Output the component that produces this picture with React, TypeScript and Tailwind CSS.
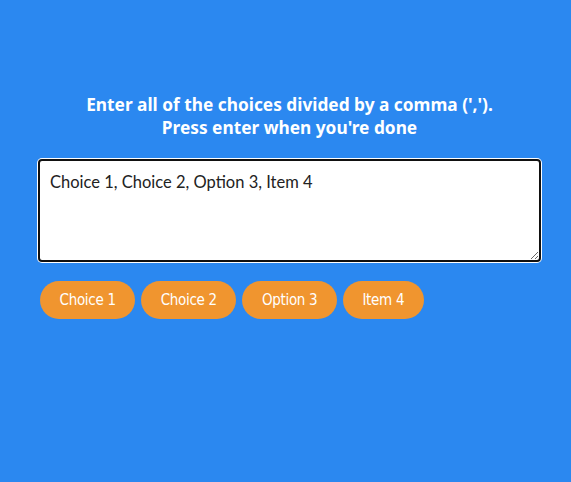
import { useState } from 'react';

export default function App() {
  const [text, setText] = useState('Choice 1, Choice 2, Option 3, Item 4');
  const choices = text.split(',').map((c) => c.trim()).filter(Boolean);

  return (
    <div className="min-h-screen bg-[#2b88f0] pt-[93px]" style={{ fontFamily: 'Lato, "Noto Sans", sans-serif' }}>
      <div className="ml-[38px] w-[503px]">
        <h1
          className="text-center text-[17.3px] leading-[23px] font-bold text-white"
          style={{ fontFamily: '"Noto Sans", Lato, sans-serif' }}
        >
          Enter all of the choices divided by a comma (',').
          <br />
          Press enter when you're done
        </h1>

        <textarea
          autoFocus
          value={text}
          onChange={(e) => setText(e.target.value)}
          className="mt-[20px] block h-[103px] w-full rounded-[4px] border-2 border-[#111] bg-white px-[10px] py-[11px] text-[16.5px] leading-[20px] text-[#222] outline-none ring-1 ring-white"
        />

        <div className="mt-[19px] flex flex-wrap gap-[6px] px-[2px]">
          {choices.map((choice, i) => (
            <span
              key={i}
              className="flex h-[38px] items-center rounded-full bg-[#f0952f] px-[19.5px] text-[15px] tracking-[-0.3px] text-white"
              style={{ fontFamily: '"DejaVu Sans Condensed", "DejaVu Sans", sans-serif', fontStretch: 'condensed' }}
            >
              {choice}
            </span>
          ))}
        </div>
      </div>
    </div>
  );
}
